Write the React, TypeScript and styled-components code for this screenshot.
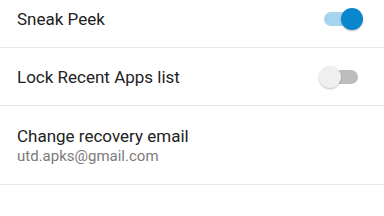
import styled, { createGlobalStyle } from 'styled-components'

const GlobalStyle = createGlobalStyle`
body{
    margin: 0;
    background: #ffffff;
    font-family: Roboto, "Noto Sans", sans-serif;
}
`

const List = styled.div`
display: flex;
flex-direction: column;
margin-top: -10px;
`

const Row = styled.div<{ $height: number }>`
display: flex;
align-items: center;
justify-content: space-between;
height: ${p => p.$height}px;
padding: 0 26px 0 17px;
border-bottom: 1px solid #e6e6e6;
`

const Texts = styled.div`
display: flex;
flex-direction: column;
gap: 1px;
`

const Title = styled.p`
margin: 0;
font-size: 17px;
color: #222222;
`

const Summary = styled.p`
margin: 0;
font-size: 15px;
color: #7a7a7a;
`

const Track = styled.div<{ $on: boolean }>`
position: relative;
width: 34px;
height: 14px;
border-radius: 7px;
background: ${p => p.$on ? '#a6d3ee' : '#bdbdbd'};
`

const Knob = styled.div<{ $on: boolean }>`
position: absolute;
top: -4px;
left: ${p => p.$on ? '17px' : '-5px'};
width: 22px;
height: 22px;
border-radius: 50%;
background: ${p => p.$on ? '#0a86cc' : '#efefef'};
box-shadow: 0 1px 2px rgba(0,0,0,0.25);
`

const Switch = ({ on }: { on: boolean }) => (
    <Track $on={on}>
        <Knob $on={on} />
    </Track>
)

const App = () => {
    return (
        <>
            <GlobalStyle />
            <List>
                <Row $height={57}>
                    <Title>Sneak Peek</Title>
                    <Switch on />
                </Row>
                <Row $height={57}>
                    <Title>Lock Recent Apps list</Title>
                    <Switch on={false} />
                </Row>
                <Row $height={78}>
                    <Texts>
                        <Title>Change recovery email</Title>
                        <Summary>utd.apks@gmail.com</Summary>
                    </Texts>
                </Row>
            </List>
        </>
    )
}

export default App
